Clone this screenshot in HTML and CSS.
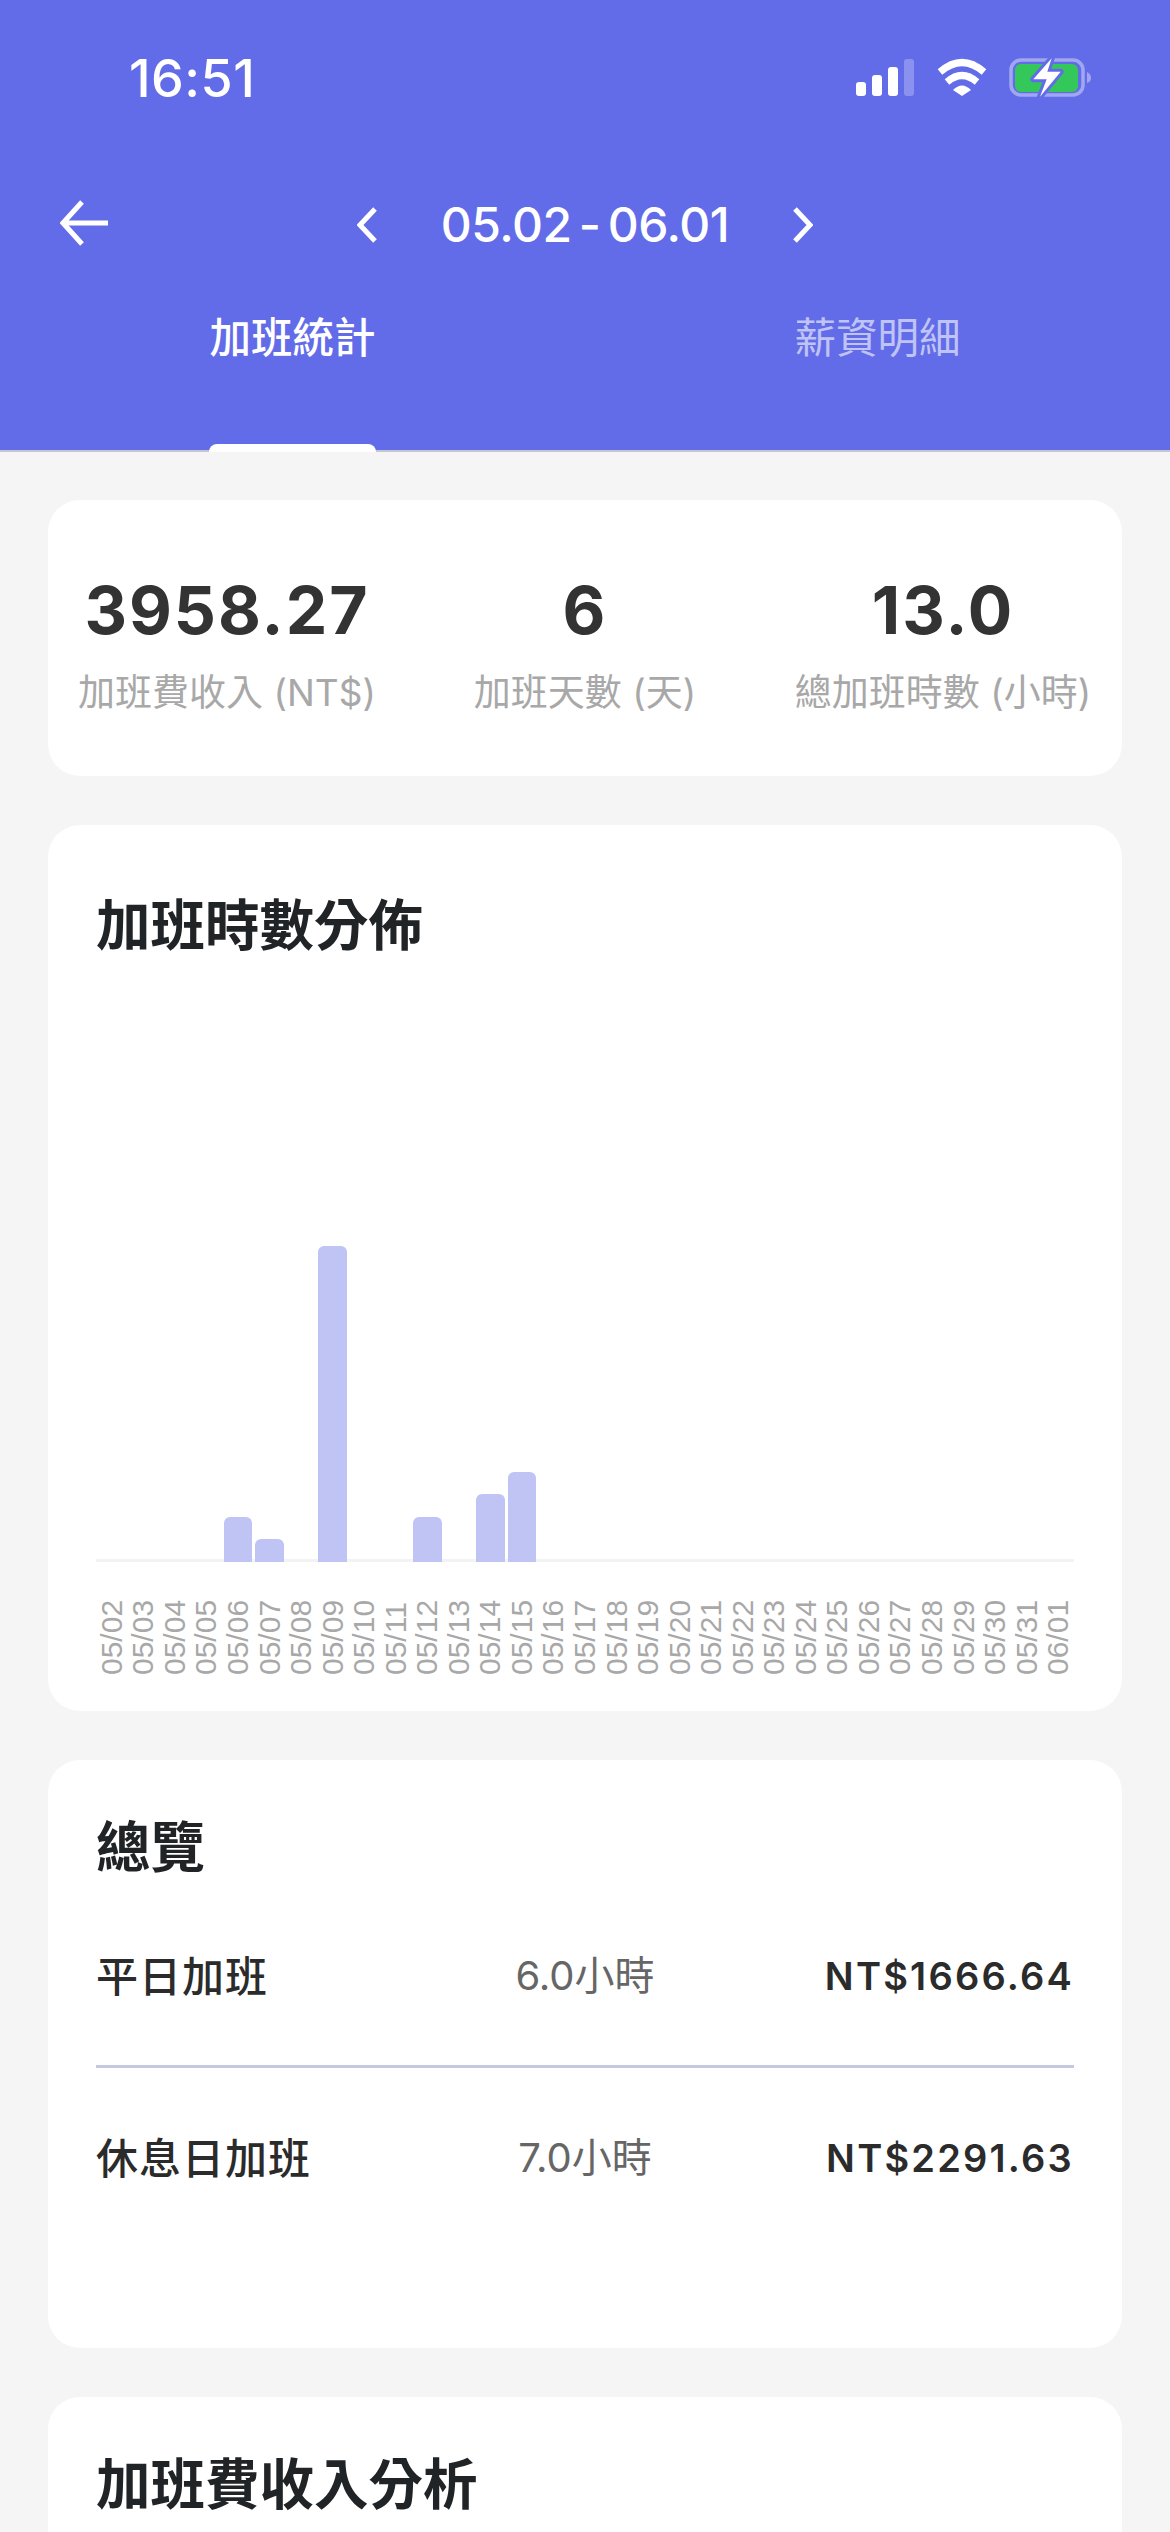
FILE: index.html
```html
<!DOCTYPE html>
<html lang="zh-Hant">
<head>
    <meta charset="UTF-8">
    <meta name="viewport" content="width=device-width, initial-scale=1.0">
    <title>加班統計</title>
    <link rel="stylesheet" href="styles.css">
</head>
<body>
    <header class="top">
        <div class="status">
            <span class="time">16:51</span>
            <svg class="status-icons" width="235" height="41" viewBox="0 0 235 41">
                <rect x="0" y="25" width="10" height="14" rx="3" fill="#fff"/>
                <rect x="16" y="18" width="10" height="21" rx="3" fill="#fff"/>
                <rect x="32" y="10" width="10" height="29" rx="3" fill="#fff"/>
                <rect x="48" y="2" width="10" height="37" rx="3" fill="#fff" opacity=".25"/>
                <path d="M84 15Q106-4 128 15M91 25Q106 12 121 25" fill="none" stroke="#fff" stroke-width="7"/>
                <path d="M97 33Q106 24 115 33L106 39Z" fill="#fff"/>
                <rect x="155" y="3" width="72" height="35" rx="10" fill="none" stroke="#fff" stroke-width="3.5" opacity=".4"/>
                <rect x="159" y="7" width="63" height="28" rx="6" fill="#34c759"/>
                <path d="M231 15Q235 17 235 21Q235 25 231 26Z" fill="#fff" opacity=".4"/>
                <path d="M195.7 1.3L177.3 22.3H190.7L184 39.7L204.7 14.7H191.3Z" fill="#fff" stroke="#636ce8" stroke-width="6" paint-order="stroke" stroke-linejoin="round"/>
            </svg>
        </div>
        <div class="nav-row">
            <svg class="back" width="48" height="46" viewBox="0 0 48 46">
                <path d="M22 2L3 23L22 44M3 23H48" fill="none" stroke="#fff" stroke-width="5"/>
            </svg>
            <div class="range">
                <svg width="20" height="36" viewBox="0 0 20 36"><path d="M18 2L3 18L18 34" fill="none" stroke="#fff" stroke-width="5"/></svg>
                <span class="range-text">05.02 - 06.01</span>
                <svg width="20" height="36" viewBox="0 0 20 36"><path d="M2 2L17 18L2 34" fill="none" stroke="#fff" stroke-width="5"/></svg>
            </div>
        </div>
        <nav class="tabs">
            <div class="tab active"><span>加班統計</span></div>
            <div class="tab"><span>薪資明細</span></div>
        </nav>
    </header>

    <main class="content">
        <section class="card stats">
            <div class="stat">
                <div class="stat-value">3958.27</div>
                <div class="stat-label">加班費收入 (NT$)</div>
            </div>
            <div class="stat">
                <div class="stat-value">6</div>
                <div class="stat-label">加班天數 (天)</div>
            </div>
            <div class="stat">
                <div class="stat-value">13.0</div>
                <div class="stat-label">總加班時數 (小時)</div>
            </div>
        </section>

        <section class="card chart-card">
            <h2 class="card-title">加班時數分佈</h2>
            <div class="plot">
                <i></i><i></i><i></i><i></i>
                <i class="bar" style="height:45px"></i>
                <i class="bar" style="height:23px"></i>
                <i></i>
                <i class="bar" style="height:316px"></i>
                <i></i><i></i>
                <i class="bar" style="height:45px"></i>
                <i></i>
                <i class="bar" style="height:68px"></i>
                <i class="bar" style="height:90px"></i>
            </div>
            <div class="dates">
                <span>05/02</span><span>05/03</span><span>05/04</span><span>05/05</span><span>05/06</span><span>05/07</span><span>05/08</span><span>05/09</span><span>05/10</span><span>05/11</span><span>05/12</span><span>05/13</span><span>05/14</span><span>05/15</span><span>05/16</span><span>05/17</span><span>05/18</span><span>05/19</span><span>05/20</span><span>05/21</span><span>05/22</span><span>05/23</span><span>05/24</span><span>05/25</span><span>05/26</span><span>05/27</span><span>05/28</span><span>05/29</span><span>05/30</span><span>05/31</span><span>06/01</span>
            </div>
        </section>

        <section class="card overview">
            <h2 class="card-title">總覽</h2>
            <div class="row">
                <span class="row-name">平日加班</span>
                <span class="row-hours">6.0小時</span>
                <span class="row-pay">NT$1666.64</span>
            </div>
            <div class="row-divider"></div>
            <div class="row">
                <span class="row-name">休息日加班</span>
                <span class="row-hours">7.0小時</span>
                <span class="row-pay">NT$2291.63</span>
            </div>
        </section>

        <section class="card analysis">
            <h2 class="card-title">加班費收入分析</h2>
        </section>
    </main>
</body>
</html>
```

FILE: styles.css
```css
html, body {
    margin: 0;
    padding: 0;
    height: 2532px;
    overflow: hidden;
}

body {
    font-family: Inter, "Noto Sans CJK TC", sans-serif;
    background-color: #f5f5f5;
    color: #212427;
}

/* Purple header */
.top {
    background-color: #636ce8;
    color: #fff;
    height: 450px;
    border-bottom: 2px solid #c4c6d4;
    display: flex;
    flex-direction: column;
}

.status {
    display: flex;
    justify-content: space-between;
    align-items: flex-start;
    padding: 50px 79px 0 129px;
    height: 60px;
}

.time {
    font-size: 52px;
    font-weight: 500;
    line-height: 58px;
    letter-spacing: 0.5px;
}

.status-icons {
    margin-top: 7px;
}

.nav-row {
    position: relative;
    display: flex;
    justify-content: center;
    padding-top: 92px;
    height: 58px;
}

.back {
    position: absolute;
    left: 60px;
    top: 90px;
}

.range {
    display: flex;
    align-items: center;
    gap: 64px;
    height: 46px;
}

.range-text {
    font-size: 48px;
    font-weight: 500;
    line-height: 46px;
    letter-spacing: -0.5px;
    word-spacing: -5px;
    white-space: nowrap;
}

.tabs {
    display: flex;
    flex: 1;
}

.tab {
    flex: 1;
    display: flex;
    justify-content: center;
    font-size: 41.5px;
    line-height: 60px;
    color: rgba(255, 255, 255, 0.6);
}

.tab span {
    position: relative;
    padding-top: 48px;
}

.tab.active {
    color: #fff;
    font-weight: 500;
}

.tab.active span::after {
    content: "";
    position: absolute;
    left: 0;
    right: 0;
    bottom: -2px;
    height: 8px;
    background-color: #fff;
    border-radius: 8px 8px 0 0;
}

/* Cards */
.content {
    height: 2080px;
    box-sizing: border-box;
    overflow: hidden;
    padding: 48px 48px 0;
    display: flex;
    flex-direction: column;
    gap: 49px;
}

.card {
    background-color: #fff;
    border-radius: 32px;
    flex-shrink: 0;
}

.card-title {
    margin: 0;
    font-size: 54.5px;
    font-weight: 700;
    line-height: 70px;
    color: #212427;
}

.stats {
    height: 276px;
    display: flex;
    box-sizing: border-box;
    padding-top: 73px;
}

.stat {
    flex: 1;
    text-align: center;
}

.stat-value {
    font-size: 66px;
    font-weight: 700;
    line-height: 74px;
    letter-spacing: 2px;
    color: #333;
}

.stat-label {
    font-size: 37px;
    line-height: 50px;
    margin-top: 21px;
    color: #a8a8a8;
    white-space: nowrap;
}

.chart-card {
    height: 886px;
    box-sizing: border-box;
    padding: 65px 48px 0;
}

.plot {
    height: 602px;
    display: grid;
    grid-template-columns: repeat(31, 1fr);
    align-items: end;
    box-shadow: inset 0 -3px 0 #f3f3f3;
}

.bar {
    display: block;
    margin: 0 1.5px;
    background-color: #c0c4f5;
    border-radius: 6px 6px 0 0;
}

.dates {
    display: grid;
    grid-template-columns: repeat(31, 1fr);
    margin-top: 33px;
}

.dates span {
    writing-mode: vertical-rl;
    transform: rotate(180deg);
    justify-self: center;
    height: 80px;
    font-family: "Liberation Sans", sans-serif;
    font-size: 30px;
    line-height: 30px;
    color: #a8a8a8;
}

.overview {
    height: 588px;
    box-sizing: border-box;
    padding: 52px 48px 0;
}

.overview .card-title {
    margin-bottom: 4px;
}

.row {
    display: grid;
    grid-template-columns: 1fr auto 1fr;
    align-items: center;
    height: 174px;
}

.row-divider {
    height: 3px;
    margin-top: 5px;
    background-color: #c6c8e2;
}

.row-name {
    font-size: 42px;
    font-weight: 500;
    color: #2b2b2b;
    letter-spacing: 1px;
}

.row-hours {
    font-size: 40px;
    color: #666;
}

.row-pay {
    text-align: right;
    font-size: 38px;
    font-weight: 600;
    letter-spacing: 2.2px;
    padding-top: 6px;
    color: #2b2b2b;
}

.analysis {
    height: 300px;
    box-sizing: border-box;
    padding: 52px 48px 0;
}
```
